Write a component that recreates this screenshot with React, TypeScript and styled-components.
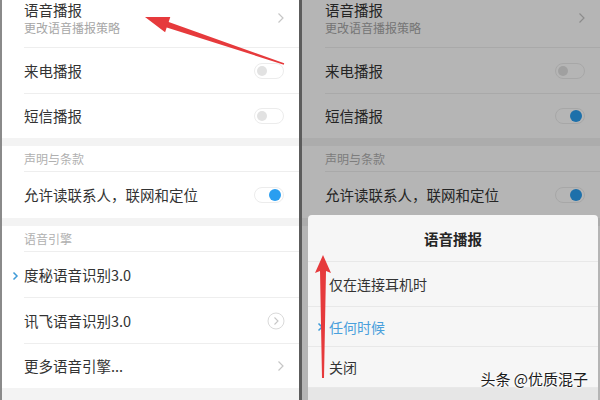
import React from "react";
import styled, { createGlobalStyle } from "styled-components";

const Global = createGlobalStyle`
  html, body { margin: 0; padding: 0; background: #ffffff; }
  body { font-family: "Noto Sans CJK SC", "Noto Sans", sans-serif; }
`;

const Screen = styled.div`
  position: relative;
  width: 600px;
  height: 400px;
  display: flex;
  overflow: hidden;
  background: #6a6a6a;
`;

const Panel = styled.div<{ $w: number }>`
  position: relative;
  width: ${(p) => p.$w}px;
  height: 400px;
  display: flex;
  flex-direction: column;
  background: #ffffff;
  overflow: hidden;
`;

const LeftEdge = styled.div`
  width: 2px;
  background: #8a8a8a;
`;

const Separator = styled.div`
  width: 3px;
  background: #5c5c5c;
`;

const Gap = styled.div<{ $h: number }>`
  height: ${(p) => p.$h}px;
  background: #f3f3f3;
  flex-shrink: 0;
`;

const Row = styled.div<{ $h: number; $pad: number }>`
  height: ${(p) => p.$h}px;
  flex-shrink: 0;
  display: flex;
  padding-left: ${(p) => p.$pad}px;
`;

const RowInner = styled.div<{ $line: boolean; $top: boolean }>`
  flex: 1;
  display: flex;
  align-items: ${(p) => (p.$top ? "flex-start" : "center")};
  border-bottom: 1px solid ${(p) => (p.$line ? "#eeeeee" : "transparent")};
  padding-right: 14px;
  box-sizing: border-box;
`;

const TextCol = styled.div`
  flex: 1;
  display: flex;
  flex-direction: column;
`;

const Title = styled.div`
  font-size: 14.5px;
  line-height: 20px;
  color: #333333;
  white-space: nowrap;
`;

const Subtitle = styled.div`
  font-size: 12px;
  line-height: 16px;
  color: #a6a6a6;
  white-space: nowrap;
`;

const Header = styled.div`
  font-size: 12px;
  color: #b0b0b0;
  white-space: nowrap;
`;

const Marker = styled.span`
  display: inline-flex;
  width: 8px;
  margin-left: -12px;
  margin-right: 4px;
`;

const ChevSlot = styled.div<{ $top: boolean }>`
  display: flex;
  margin-top: ${(p) => (p.$top ? "12px" : "0")};
`;

const Toggle = styled.div<{ $on: boolean }>`
  width: 30px;
  height: 16px;
  box-sizing: border-box;
  border-radius: 8px;
  border: 1px solid #ececec;
  background: #ffffff;
  display: flex;
  align-items: center;
  justify-content: ${(p) => (p.$on ? "flex-end" : "flex-start")};
  padding: 0 2px;
  margin-right: 1px;
`;

const Knob = styled.div<{ $on: boolean }>`
  width: ${(p) => (p.$on ? 12 : 10)}px;
  height: ${(p) => (p.$on ? 12 : 10)}px;
  border-radius: 50%;
  background: ${(p) => (p.$on ? "#2a9ef0" : "#e2e2e2")};
`;

const Dim = styled.div`
  position: absolute;
  inset: 0;
  background: rgba(0, 0, 0, 0.29);
`;

const Dialog = styled.div`
  position: absolute;
  left: 6px;
  right: 2px;
  top: 215px;
  bottom: 0;
  background: #f6f6f6;
  border-radius: 4px 4px 0 0;
  display: flex;
  flex-direction: column;
`;

const DialogTitle = styled.div`
  height: 47px;
  flex-shrink: 0;
  display: flex;
  align-items: center;
  justify-content: center;
  font-size: 14.5px;
  font-weight: 700;
  color: #262626;
  border-bottom: 1px solid #e8e8e8;
  box-sizing: border-box;
`;

const Option = styled.div<{ $active?: boolean; $h: number }>`
  height: ${(p) => p.$h}px;
  flex-shrink: 0;
  display: flex;
  align-items: center;
  padding-left: 21px;
  font-size: 14px;
  color: ${(p) => (p.$active ? "#4aa0dc" : "#333333")};
  border-bottom: 1px solid #e8e8e8;
  box-sizing: border-box;
`;

const DialogFoot = styled.div`
  flex: 1;
  background: #e6e6e6;
`;

const Watermark = styled.div`
  position: absolute;
  right: 12px;
  bottom: 11px;
  font-size: 15px;
  color: #1c1c1c;
  white-space: nowrap;
  text-shadow: 0 0 2px #fff, 0 0 2px #fff, 0 0 3px #fff;
`;

const ArrowLayer = styled.svg`
  position: absolute;
  left: 0;
  top: 0;
  pointer-events: none;
`;

const Chevron = ({ color = "#c6c6c6" }: { color?: string }) => (
  <svg width="8" height="12" viewBox="0 0 8 12">
    <polyline points="1.5,1.5 6,6 1.5,10.5" fill="none" stroke={color} strokeWidth="1.2" />
  </svg>
);

const CircleChevron = () => (
  <svg width="18" height="18" viewBox="0 0 18 18">
    <circle cx="9" cy="9" r="8" fill="none" stroke="#dadada" strokeWidth="1" />
    <polyline points="7.5,5.5 11,9 7.5,12.5" fill="none" stroke="#c6c6c6" strokeWidth="1.1" />
  </svg>
);

const SmallChevron = () => (
  <svg width="7" height="10" viewBox="0 0 7 10">
    <polyline points="1.5,1.5 5,5 1.5,8.5" fill="none" stroke="#3f9bd8" strokeWidth="1.5" />
  </svg>
);

type Item =
  | { kind: "gap"; h: number }
  | { kind: "header"; h: number; text: string }
  | {
      kind: "row";
      h: number;
      title: string;
      sub?: string;
      right?: "chev" | "circle" | "off" | "on";
      marked?: boolean;
      line: boolean;
    };

const buildItems = (smsOn: boolean): Item[] => [
  { kind: "row", h: 48, title: "语音播报", sub: "更改语音播报策略", right: "chev", line: true },
  { kind: "row", h: 46, title: "来电播报", right: "off", line: true },
  { kind: "row", h: 44, title: "短信播报", right: smsOn ? "on" : "off", line: false },
  { kind: "gap", h: 8 },
  { kind: "header", h: 26, text: "声明与条款" },
  { kind: "row", h: 46, title: "允许读联系人，联网和定位", right: "on", line: false },
  { kind: "gap", h: 8 },
  { kind: "header", h: 26, text: "语音引擎" },
  { kind: "row", h: 46, title: "度秘语音识别3.0", marked: true, line: true },
  { kind: "row", h: 46, title: "讯飞语音识别3.0", right: "circle", line: true },
  { kind: "row", h: 44, title: "更多语音引擎...", right: "chev", line: false },
  { kind: "gap", h: 12 },
];

const SettingsList = ({ items, pad }: { items: Item[]; pad: number }) => (
  <>
    {items.map((it, i) => {
      if (it.kind === "gap") return <Gap key={i} $h={it.h} />;
      if (it.kind === "header")
        return (
          <Row key={i} $h={it.h} $pad={pad}>
            <RowInner $line={true} $top={false}>
              <Header>{it.text}</Header>
            </RowInner>
          </Row>
        );
      const top = !!it.sub;
      return (
        <Row key={i} $h={it.h} $pad={pad}>
          <RowInner $line={it.line} $top={top}>
            <TextCol>
              <Title>
                {it.marked && (
                  <Marker>
                    <SmallChevron />
                  </Marker>
                )}
                {it.title}
              </Title>
              {it.sub && <Subtitle>{it.sub}</Subtitle>}
            </TextCol>
            {it.right === "chev" && (
              <ChevSlot $top={top}>
                <Chevron />
              </ChevSlot>
            )}
            {it.right === "circle" && <CircleChevron />}
            {(it.right === "on" || it.right === "off") && (
              <Toggle $on={it.right === "on"}>
                <Knob $on={it.right === "on"} />
              </Toggle>
            )}
          </RowInner>
        </Row>
      );
    })}
  </>
);

export default function App() {
  return (
    <>
      <Global />
      <Screen>
        <LeftEdge />
        <Panel $w={297}>
          <SettingsList items={buildItems(false)} pad={22} />
        </Panel>
        <Separator />
        <Panel $w={298}>
          <SettingsList items={buildItems(true).slice(0, 7)} pad={23} />
          <Dim />
          <Dialog>
            <DialogTitle>语音播报</DialogTitle>
            <Option $h={45}>仅在连接耳机时</Option>
            <Option $h={40} $active>
              <Marker>
                <SmallChevron />
              </Marker>
              任何时候
            </Option>
            <Option $h={41}>关闭</Option>
            <DialogFoot />
          </Dialog>
          <Watermark>头条 @优质混子</Watermark>
        </Panel>
        <ArrowLayer width="600" height="400" viewBox="0 0 600 400">
          <polygon
            points="145,17 170.3,17.1 168.7,21.9 284.2,63.3 283.8,64.7 166.7,27.5 165.1,32.3"
            fill="#e63a3c"
          />
          <polygon
            points="323,255 331,273 326,271 324,378 322,378 320,271 315,273"
            fill="#e63a3c"
          />
        </ArrowLayer>
      </Screen>
    </>
  );
}
